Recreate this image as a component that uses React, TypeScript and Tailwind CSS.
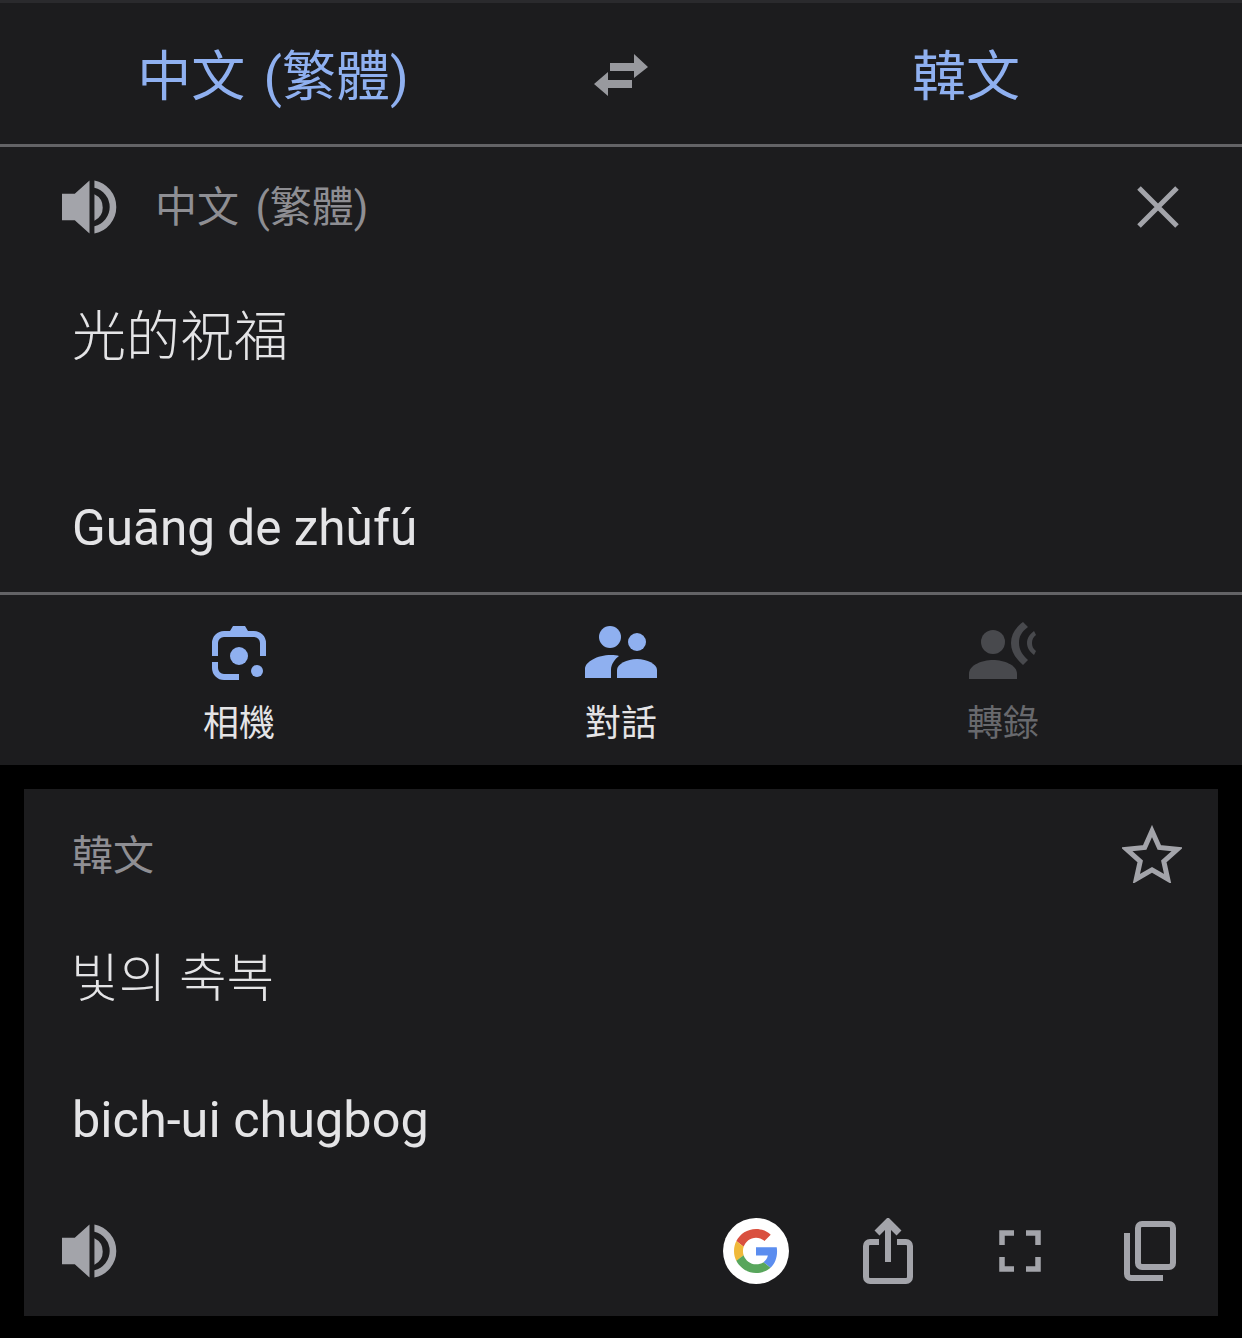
const CJK = "font-['Roboto','Noto_Sans_CJK_TC','Noto_Sans_CJK_KR',sans-serif]";

function Speaker() {
  return (
    <svg width="55" height="54" viewBox="0 0 56 54" fill="#a3a4aa" className="block">
      <path d="M0 13.500h13L28 0v54L13 40.500H0z" />
      <path d="M33 14a15 15 0 0 1 0 27z" />
      <path d="M33 0a27.500 27.500 0 0 1 0 54v-7.500a20 20 0 0 0 0-39z" />
    </svg>
  );
}

function CameraIcon() {
  return (
    <svg width="54" height="54" viewBox="0 0 54 54" fill="#8fb0f0" className="block">
      <path d="M21 0h12l3 5h6a12 12 0 0 1 12 12v13h-6V17a6 6 0 0 0-6-6H12a6 6 0 0 0-6 6v13H0V17A12 12 0 0 1 12 5h6z" />
      <path d="M0 36h6v6a6 6 0 0 0 6 6h15v6H12A12 12 0 0 1 0 42z" />
      <circle cx="27" cy="30" r="9" />
      <circle cx="45" cy="45" r="6" />
    </svg>
  );
}

function PeopleIcon() {
  return (
    <svg width="72" height="52" viewBox="0 0 72 52" fill="#8fb0f0" className="block mb-[2px]">
      <circle cx="25" cy="11" r="11" />
      <circle cx="52" cy="16" r="9" />
      <path d="M0 52V43C0 36 12 29 26 29c3 0 6 .3 8 1-4 3-8 8-8 14v8z" />
      <path d="M32 52v-8c0-6 10-11 20-11s20 5 20 11v8z" />
    </svg>
  );
}

function TranscribeIcon() {
  return (
    <svg width="68" height="58" viewBox="0 0 68 58" fill="#48494d" className="block">
      <circle cx="24" cy="20" r="12" />
      <path d="M0 57v-5c0-9 13-14 24-14s24 5 24 14v5z" />
      <path d="M54 0l5 5c-7 5-9 10-9 16s3 12 9 17l-5 5c-8-7-12-14-12-22S46 6 54 0z" />
      <path d="M65 9l2 4c-3 2-4 5-4 8s1 6 4 8l-2 4c-4-3-7-7-7-12s3-9 7-12z" />
    </svg>
  );
}

function GoogleIcon() {
  return (
    <div className="w-[66px] h-[66px] rounded-full bg-white flex items-center justify-center">
      <svg width="44" height="44" viewBox="0 0 48 48" className="block">
        <path fill="#D9503F" d="M24 9.500c3.540 0 6.710 1.220 9.210 3.600l6.850-6.850C35.900 2.380 30.470 0 24 0 14.620 0 6.510 5.380 2.560 13.220l7.980 6.190C12.430 13.720 17.740 9.500 24 9.500z" />
        <path fill="#5B8DEF" d="M46.980 24.550c0-1.570-.15-3.090-.38-4.550H24v9.020h12.940c-.58 2.960-2.260 5.480-4.780 7.180l7.730 6c4.510-4.180 7.090-10.360 7.090-17.650z" />
        <path fill="#F0B93A" d="M10.530 28.590c-.48-1.450-.76-2.990-.76-4.590s.27-3.140.76-4.590l-7.980-6.190C.92 16.460 0 20.120 0 24c0 3.880.92 7.540 2.560 10.780l7.970-6.190z" />
        <path fill="#58A65C" d="M24 48c6.480 0 11.930-2.130 15.890-5.810l-7.730-6c-2.150 1.450-4.920 2.300-8.160 2.300-6.260 0-11.570-4.220-13.470-9.910l-7.980 6.190C6.510 42.620 14.620 48 24 48z" />
      </svg>
    </div>
  );
}

function ShareIcon() {
  return (
    <svg width="50" height="66" viewBox="0 0 50 66" fill="none" stroke="#a3a4aa" strokeWidth="6" className="block">
      <path d="M25 44V5" />
      <path d="M14 15L25 4l11 11" strokeWidth="7" />
      <path d="M16 24H7a4 4 0 0 0-4 4v31a4 4 0 0 0 4 4h36a4 4 0 0 0 4-4V28a4 4 0 0 0-4-4h-9" />
    </svg>
  );
}

function FullscreenIcon() {
  return (
    <svg width="42" height="42" viewBox="0 0 42 42" fill="none" stroke="#a3a4aa" strokeWidth="5.500" className="block">
      <path d="M15 3H3v12M27 3h12v12M3 27v12h12M39 27v12H27" />
    </svg>
  );
}

function CopyIcon() {
  return (
    <svg width="52" height="60" viewBox="0 0 52 60" fill="none" stroke="#a3a4aa" strokeWidth="6" className="block">
      <rect x="14" y="3" width="35" height="43" rx="4" />
      <path d="M3 12v41a4 4 0 0 0 4 4h32" />
    </svg>
  );
}

function Tab({ icon, label, dim }: { icon: React.ReactNode; label: string; dim?: boolean }) {
  return (
    <div className="w-[382px] flex flex-col items-center">
      <div className="h-[60px] flex items-end justify-center">{icon}</div>
      <span className={`mt-[21px] font-normal text-[36px] leading-[46px] ${dim ? 'text-[#68696d]' : 'text-[#e4e4e6]'}`}>
        {label}
      </span>
    </div>
  );
}

export default function App() {
  return (
    <div className={`w-[1242px] h-[1338px] bg-black overflow-hidden font-light ${CJK}`}>
      <div className="h-[3px] bg-[#2a2a2d]" />

      <div className="h-[141px] bg-[#1c1c1e] flex items-center pt-[8px] font-normal text-[#8fb0f0] text-[54px] [word-spacing:5px]">
        <div className="w-[546px] text-center">中文 (繁體)</div>
        <div className="w-[150px] flex justify-center -mt-[6px]">
          <svg width="54" height="42" viewBox="0 0 54 42" fill="#98999e" className="block">
            <path d="M40 0l14 13-14 11v-7H16V9h24z" />
            <path d="M14 18L0 30l14 12v-8h24v-8H14z" />
          </svg>
        </div>
        <div className="w-[540px] text-center">韓文</div>
      </div>

      <div className="h-[451px] bg-[#1c1c1e] border-y-[3px] border-[#636366] flex flex-col">
        <div className="flex items-center justify-between px-[62px] pt-[32px]">
          <div className="flex items-center gap-[38px]">
            <Speaker />
            <span className="pt-[2px] font-normal text-[42px] leading-[54px] text-[#8e8e93] [word-spacing:6px]">中文 (繁體)</span>
          </div>
          <svg width="44" height="44" viewBox="0 0 44 44" stroke="#a3a4aa" strokeWidth="5" className="block">
            <path d="M3 3l38 38M41 3L3 41" />
          </svg>
        </div>
        <div className="pl-[72px] mt-[67px] text-[54px] leading-[72px] text-[#e4e4e6]">光的祝福</div>
        <div className="pl-[72px] mt-[124px] font-normal text-[49.500px] leading-[60px] text-[#e4e4e6]">Guāng de zhùfú</div>
      </div>

      <div className="h-[170px] bg-[#1c1c1e] flex justify-center pt-[25px]">
        <Tab icon={<CameraIcon />} label="相機" />
        <Tab icon={<PeopleIcon />} label="對話" />
        <Tab icon={<TranscribeIcon />} label="轉錄" dim />
      </div>

      <div className="mt-[24px] mx-[24px] h-[527px] bg-[#1c1c1e] flex flex-col">
        <div className="flex items-center justify-between pl-[48px] pr-[36px] pt-[35px]">
          <span className="font-normal text-[41px] leading-[60px] text-[#8e8e93] pt-[2px]">韓文</span>
          <svg width="60" height="58" viewBox="0 0 60 58" fill="none" stroke="#a3a4aa" strokeWidth="5" className="-mt-[2px] block">
            <path d="M30 6l7.300 16.500 18 1.800-13.500 12 3.900 17.700L30 44.800 14.300 54l3.900-17.700-13.500-12 18-1.800z" />
          </svg>
        </div>
        <div className="pl-[47px] mt-[58px] text-[51.800px] leading-[72px] text-[#e4e4e6]">빛의 축복</div>
        <div className="pl-[48px] mt-[74px] font-normal text-[50.400px] leading-[60px] text-[#e4e4e6]">bich-ui chugbog</div>
        <div className="flex items-center justify-between pl-[38px] pr-[42px] mt-[68px]">
          <Speaker />
          <div className="flex items-center">
            <GoogleIcon />
            <div className="ml-[74px]"><ShareIcon /></div>
            <div className="ml-[86px]"><FullscreenIcon /></div>
            <div className="ml-[83px]"><CopyIcon /></div>
          </div>
        </div>
      </div>
    </div>
  );
}
